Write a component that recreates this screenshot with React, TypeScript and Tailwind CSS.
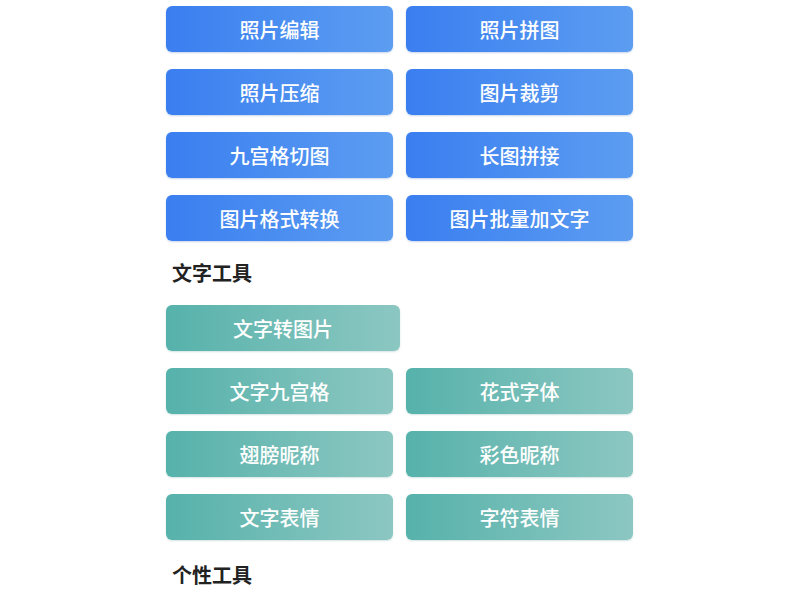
const IMAGE_TOOLS = [
  '照片编辑',
  '照片拼图',
  '照片压缩',
  '图片裁剪',
  '九宫格切图',
  '长图拼接',
  '图片格式转换',
  '图片批量加文字',
];

const TEXT_TOOLS = ['文字九宫格', '花式字体', '翅膀昵称', '彩色昵称', '文字表情', '字符表情'];

function BlueButton({ label }: { label: string }) {
  return (
    <button className="flex h-[46px] items-center justify-center rounded-[6px] bg-linear-to-r from-[#3a7ef0] to-[#5c9df1] pt-[1px] text-[20px] font-medium text-white shadow-[0_1px_2px_rgba(40,90,180,0.25)]">
      {label}
    </button>
  );
}

function TealButton({ label, className = '' }: { label: string; className?: string }) {
  return (
    <button
      className={`flex h-[46px] items-center justify-center rounded-[6px] bg-linear-to-r from-[#55b2ab] to-[#8cc7c2] pt-[1px] text-[20px] font-medium text-white shadow-[0_1px_2px_rgba(40,120,110,0.2)] ${className}`}
    >
      {label}
    </button>
  );
}

function SectionTitle({ title }: { title: string }) {
  return (
    <h2 className="flex h-[64px] items-center pl-[6px] text-[20px] font-bold text-[#222]">{title}</h2>
  );
}

export default function App() {
  return (
    <div
      className="min-h-screen bg-white"
      style={{ fontFamily: '"Noto Sans CJK SC", "Noto Sans", sans-serif' }}
    >
      <div className="ml-[166px] w-[467px] pt-[6px]">
        <div className="grid grid-cols-2 gap-x-[13px] gap-y-[17px]">
          {IMAGE_TOOLS.map((t) => (
            <BlueButton key={t} label={t} />
          ))}
        </div>

        <SectionTitle title="文字工具" />

        <div className="flex flex-col gap-y-[17px]">
          <TealButton label="文字转图片" className="w-[234px]" />
          <div className="grid grid-cols-2 gap-x-[13px] gap-y-[17px]">
            {TEXT_TOOLS.map((t) => (
              <TealButton key={t} label={t} />
            ))}
          </div>
        </div>

        <h2 className="flex h-[70px] items-center pl-[6px] text-[20px] font-bold text-[#222]">个性工具</h2>
        <div className="h-[4px] rounded-t-[6px] bg-[#f7f8f6]" />
      </div>
    </div>
  );
}
